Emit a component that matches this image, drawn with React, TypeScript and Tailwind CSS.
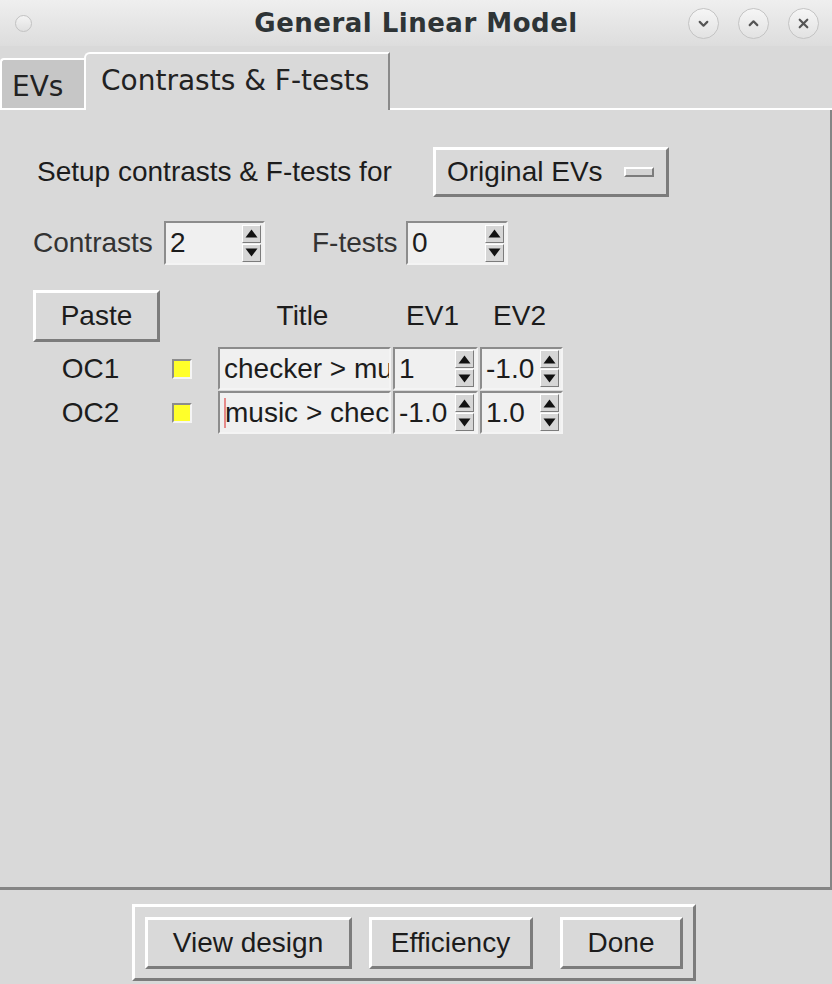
import React from 'react';

const raised = 'border-t-white border-l-white border-b-[#7c7c7c] border-r-[#7c7c7c]';
const sunken = 'border-t-[#8c8c8c] border-l-[#8c8c8c] border-b-[#f4f4f4] border-r-[#f4f4f4]';

function TitleButton({ kind }: { kind: 'min' | 'max' | 'close' }) {
    return (
        <div className="w-[31px] h-[31px] rounded-full border border-[#c4c4c4] bg-gradient-to-b from-[#f6f6f6] to-[#e2e2e2] flex items-center justify-center">
            <svg width="13" height="13" viewBox="0 0 12 12" fill="none" stroke="#555" strokeWidth="2" strokeLinecap="round" strokeLinejoin="round">
                {kind === 'min' && <path d="M2.5 4.5 L6 8 L9.5 4.5" />}
                {kind === 'max' && <path d="M2.5 7.5 L6 4 L9.5 7.5" />}
                {kind === 'close' && <path d="M2.5 2.5 L9.5 9.5 M9.5 2.5 L2.5 9.5" />}
            </svg>
        </div>
    );
}

function ArrowBtn({ up }: { up?: boolean }) {
    return (
        <div className={`w-[19px] h-[18px] bg-[#d6d6d6] border ${raised} flex items-center justify-center`}>
            <svg width="13" height="9" viewBox="0 0 13 9">
                {up ? <path d="M6.5 0.5 L12.5 8.5 L0.5 8.5 Z" fill="#111" /> : <path d="M0.5 0.5 L12.5 0.5 L6.5 8.5 Z" fill="#111" />}
            </svg>
        </div>
    );
}

function Spin({ value, className }: { value: string; className: string }) {
    return (
        <div className={`${className} flex items-center bg-[#f0f0f0] border-2 ${sunken}`}>
            <span className="flex-1 min-w-0 pl-[4px] whitespace-nowrap">{value}</span>
            <div className="flex flex-col gap-px mr-[2px]">
                <ArrowBtn up />
                <ArrowBtn />
            </div>
        </div>
    );
}

function Button({ label, className }: { label: string; className: string }) {
    return (
        <div className={`${className} bg-[#d9d9d9] border-[3px] ${raised} flex items-center justify-center`}>
            {label}
        </div>
    );
}

const contrasts = [
    { id: 'OC1', title: 'checker > music', ev1: '1', ev2: '-1.0', cursor: false },
    { id: 'OC2', title: 'music > checker', ev1: '-1.0', ev2: '1.0', cursor: true },
];

export default function App() {
    return (
        <div className="w-[832px] h-[984px] bg-[#d9d9d9] flex flex-col overflow-hidden text-[#1c1c1c]">
            {/* Title bar */}
            <div className="h-[46px] shrink-0 grid grid-cols-[1fr_auto_1fr] items-center bg-gradient-to-b from-[#efefef] to-[#dddddd]">
                <div className="pl-[15px]">
                    <div className="w-[17px] h-[17px] rounded-full border border-[#c2c2c2] bg-gradient-to-b from-[#f4f4f4] to-[#e0e0e0]" />
                </div>
                <div className="font-['DejaVu_Sans',sans-serif] font-bold text-[26px] text-[#2e3436] tracking-[0.5px]">
                    General Linear Model
                </div>
                <div className="flex justify-end gap-[19px] pr-[13px]">
                    <TitleButton kind="min" />
                    <TitleButton kind="max" />
                    <TitleButton kind="close" />
                </div>
            </div>

            {/* Tabs */}
            <div className="h-[64px] shrink-0 flex items-end font-['DejaVu_Sans',sans-serif] text-[28px] text-[#222]">
                <div className="w-[84px] h-[52px] bg-[#c6c6c6] border-t-2 border-l-2 border-b-2 border-white rounded-tl-[4px] flex items-center pl-[10px] pt-[6px]">
                    EVs
                </div>
                <div className="w-[306px] h-[58px] bg-[#d9d9d9] border-t-2 border-l-2 border-white border-r-2 border-r-[#8a8a8a] rounded-tl-[6px] flex items-center pl-[15px] pb-[2px]">
                    Contrasts &amp; F-tests
                </div>
                <div className="flex-1 border-b-2 border-white" />
            </div>

            {/* Panel */}
            <div className="flex-1 border-r-2 border-b-[3px] border-[#858585] flex flex-col font-['Liberation_Sans',Arial,sans-serif] text-[28px]">
                <div className="flex items-center pl-[37px] mt-[37px] h-[50px]">
                    <div className="w-[396px]">Setup contrasts &amp; F-tests for</div>
                    <div className={`w-[236px] h-[50px] border-[3px] ${raised} flex items-center pl-[11px]`}>
                        <span className="flex-1">Original EVs</span>
                        <div className={`w-[30px] h-[10px] mr-[12px] bg-[#d4d4d4] border-2 ${raised}`} />
                    </div>
                </div>

                <div className="flex items-center pl-[33px] mt-[24px] h-[44px]">
                    <div className="w-[131px] text-[#333]">Contrasts</div>
                    <Spin value="2" className="w-[101px] h-[44px]" />
                    <div className="w-[94px] ml-[47px] text-[#333]">F-tests</div>
                    <Spin value="0" className="w-[102px] h-[44px]" />
                </div>

                <div className="flex items-center pl-[33px] mt-[25px] h-[52px]">
                    <Button label="Paste" className="w-[127px] h-[52px]" />
                    <div className="w-[58px]" />
                    <div className="w-[173px] text-center pr-[4px]">Title</div>
                    <div className="w-[87px] text-center pr-[4px]">EV1</div>
                    <div className="w-[83px] text-center">EV2</div>
                </div>

                <div className="flex flex-col mt-[5px] gap-px">
                    {contrasts.map(c => (
                        <div key={c.id} className="flex items-center pl-[33px] h-[43px]">
                            <div className="w-[115px] text-center">{c.id}</div>
                            <div className={`ml-[24px] w-[20px] h-[20px] bg-[#ffff2a] border-2 ${sunken}`} />
                            <div className={`ml-[26px] w-[173px] h-[43px] bg-[#f0f0f0] border-2 ${sunken} flex items-center pl-[4px] overflow-hidden`}>
                                {c.cursor && <div className="shrink-0 w-[2px] h-[30px] bg-[#e58a8a] -mr-[1px]" />}
                                <span className="flex-1 min-w-0 overflow-hidden whitespace-nowrap">{c.title}</span>
                            </div>
                            <Spin value={c.ev1} className="ml-[2px] w-[85px] h-[43px]" />
                            <Spin value={c.ev2} className="ml-[2px] w-[83px] h-[43px]" />
                        </div>
                    ))}
                </div>
            </div>

            {/* Bottom buttons */}
            <div className="h-[94px] shrink-0 flex justify-center pt-[14px] font-['Liberation_Sans',Arial,sans-serif] text-[28px]">
                <div className={`h-[77px] -ml-[5px] border-[3px] ${raised} flex items-center gap-[17px] px-[10px]`}>
                    <Button label="View design" className="w-[207px] h-[52px]" />
                    <Button label="Efficiency" className="w-[164px] h-[52px]" />
                    <Button label="Done" className="w-[123px] h-[52px] ml-[10px]" />
                </div>
            </div>
        </div>
    );
}
